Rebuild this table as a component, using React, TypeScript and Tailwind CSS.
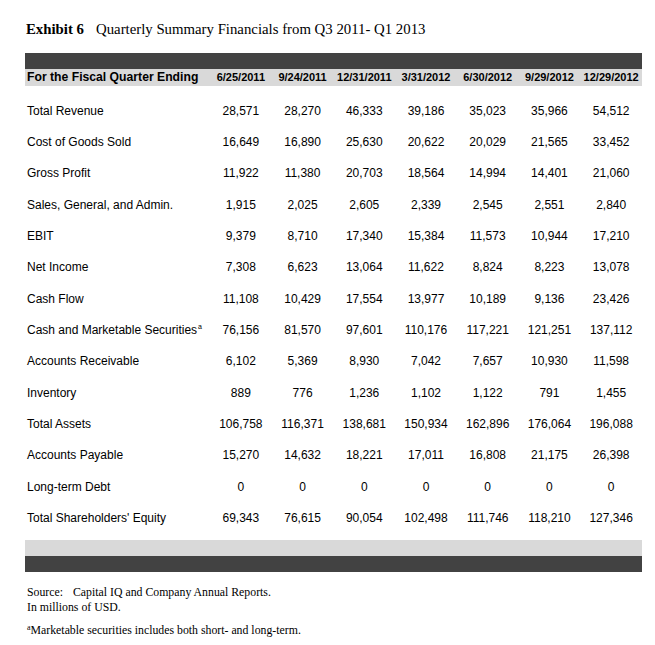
const dates = ["6/25/2011", "9/24/2011", "12/31/2011", "3/31/2012", "6/30/2012", "9/29/2012", "12/29/2012"];

const rows: { label: string; sup?: boolean; values: string[] }[] = [
	{ label: "Total Revenue", values: ["28,571", "28,270", "46,333", "39,186", "35,023", "35,966", "54,512"] },
	{ label: "Cost of Goods Sold", values: ["16,649", "16,890", "25,630", "20,622", "20,029", "21,565", "33,452"] },
	{ label: "Gross Profit", values: ["11,922", "11,380", "20,703", "18,564", "14,994", "14,401", "21,060"] },
	{ label: "Sales, General, and Admin.", values: ["1,915", "2,025", "2,605", "2,339", "2,545", "2,551", "2,840"] },
	{ label: "EBIT", values: ["9,379", "8,710", "17,340", "15,384", "11,573", "10,944", "17,210"] },
	{ label: "Net Income", values: ["7,308", "6,623", "13,064", "11,622", "8,824", "8,223", "13,078"] },
	{ label: "Cash Flow", values: ["11,108", "10,429", "17,554", "13,977", "10,189", "9,136", "23,426"] },
	{ label: "Cash and Marketable Securities", sup: true, values: ["76,156", "81,570", "97,601", "110,176", "117,221", "121,251", "137,112"] },
	{ label: "Accounts Receivable", values: ["6,102", "5,369", "8,930", "7,042", "7,657", "10,930", "11,598"] },
	{ label: "Inventory", values: ["889", "776", "1,236", "1,102", "1,122", "791", "1,455"] },
	{ label: "Total Assets", values: ["106,758", "116,371", "138,681", "150,934", "162,896", "176,064", "196,088"] },
	{ label: "Accounts Payable", values: ["15,270", "14,632", "18,221", "17,011", "16,808", "21,175", "26,398"] },
	{ label: "Long-term Debt", values: ["0", "0", "0", "0", "0", "0", "0"] },
	{ label: "Total Shareholders' Equity", values: ["69,343", "76,615", "90,054", "102,498", "111,746", "118,210", "127,346"] },
];

const serif = "font-['Liberation_Serif',serif]";
const sans = "font-['Liberation_Sans',Arial,sans-serif]";

export default function App() {
	return (
		<div className="bg-white w-[655px] h-[645px] text-black pt-[21px]">
			<div className={`${serif} text-[14.8px] leading-[17px] pl-[26px] flex`}>
				<span className="font-bold w-[70px]">Exhibit 6</span>
				<span>Quarterly Summary Financials from Q3 2011- Q1 2013</span>
			</div>

			<div className={`${sans} ml-[25px] w-[617px] mt-[15px]`}>
				<div className="h-[16px] bg-[#424242]" />
				<div className="grid grid-cols-[185px_repeat(7,1fr)] h-[17px] bg-[#d9d9d9] items-center font-bold">
					<div className="pl-[2px] text-[12.2px] leading-none">For the Fiscal Quarter Ending</div>
					{dates.map((d) => (
						<div key={d} className="text-center text-[11px] leading-none">{d}</div>
					))}
				</div>

				<div className="pt-[9px]">
					{rows.map((r) => (
						<div key={r.label} className="grid grid-cols-[185px_repeat(7,1fr)] h-[31.33px] items-center text-[12px]">
							<div className="pl-[2px] leading-none whitespace-nowrap">
								{r.label}
								{r.sup && <sup className="text-[7px] top-[-5px] align-baseline relative ml-[1px]">a</sup>}
							</div>
							{r.values.map((v, i) => (
								<div key={i} className="text-center leading-none">{v}</div>
							))}
						</div>
					))}
				</div>

				<div className="mt-[6px] h-[16px] bg-[#d9d9d9]" />
				<div className="h-[16px] bg-[#424242]" />
			</div>

			<div className={`${serif} text-[11.8px] leading-[15px] pl-[27px] mt-[13px]`}>
				<div className="flex">
					<span className="w-[46px]">Source:</span>
					<span>Capital IQ and Company Annual Reports.</span>
				</div>
				<div>In millions of USD.</div>
				<div className="mt-[8px]">
					<sup className="text-[8px] top-[-4px] align-baseline relative">a</sup>
					Marketable securities includes both short- and long-term.
				</div>
			</div>
		</div>
	);
}
